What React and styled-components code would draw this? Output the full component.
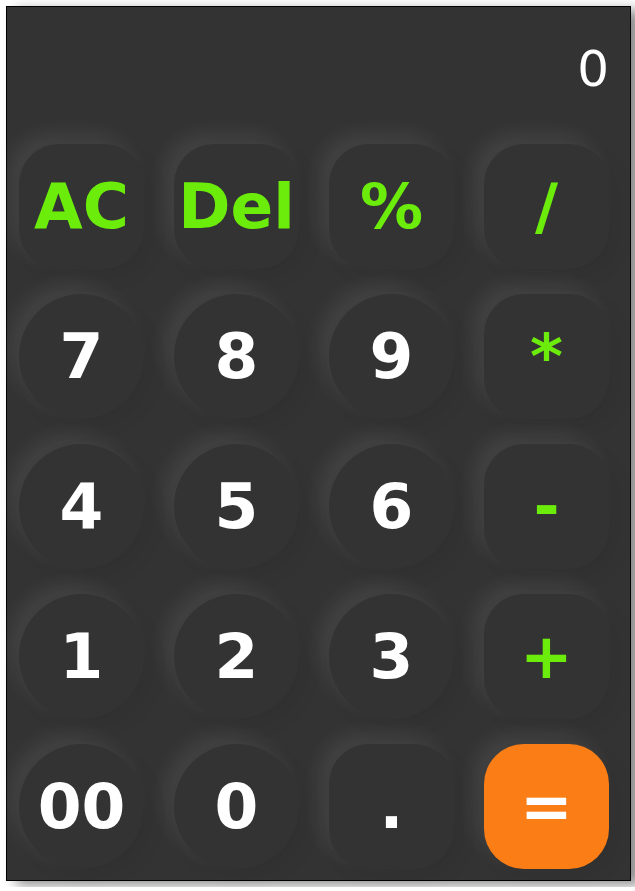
import React from 'react'
import styled, { createGlobalStyle, css } from 'styled-components'

const GlobalStyle = createGlobalStyle`
  html, body {
    margin: 0;
    padding: 0;
    background: #ffffff;
  }
  body {
    font-family: "DejaVu Sans", Verdana, sans-serif;
  }
`

const Page = styled.div`
  padding: 6px;
`

const Calculator = styled.div`
  box-sizing: border-box;
  width: 625px;
  height: 875px;
  background: #333333;
  border: 1px solid #000000;
  box-shadow: 10px 4px 12px rgba(0, 0, 0, 0.45);
  display: flex;
  flex-direction: column;
`

const Display = styled.div`
  box-sizing: border-box;
  height: 137px;
  padding: 37px 21px 0 0;
  text-align: right;
  color: #ffffff;
  font-family: "DejaVu Sans", Verdana, sans-serif;
  font-size: 50px;
  line-height: 1;
`

const Keypad = styled.div`
  display: grid;
  grid-template-columns: repeat(4, 125px);
  grid-auto-rows: 125px;
  gap: 25px 30px;
  padding: 0 0 0 12px;
`

const Key = styled.button`
  border: none;
  outline: none;
  padding: 0;
  margin: 0;
  background: #333333;
  color: ${(p) => (p.$op ? '#6cec0b' : '#ffffff')};
  font-family: "DejaVu Sans", Verdana, sans-serif;
  font-weight: bold;
  font-size: 63px;
  line-height: 1;
  display: flex;
  align-items: center;
  justify-content: center;
  border-radius: ${(p) => (p.$round ? '50%' : '40px')};
  box-shadow: -10px -10px 20px rgba(255, 255, 255, 0.08),
    8px 8px 20px rgba(0, 0, 0, 0.06);
  cursor: pointer;

  ${(p) =>
    p.$equal &&
    css`
      background: #fa7d16;
      color: #ffffff;
    `}
`

const keys = [
  { label: 'AC', op: true },
  { label: 'Del', op: true },
  { label: '%', op: true },
  { label: '/', op: true },
  { label: '7', round: true },
  { label: '8', round: true },
  { label: '9', round: true },
  { label: '*', op: true },
  { label: '4', round: true },
  { label: '5', round: true },
  { label: '6', round: true },
  { label: '-', op: true },
  { label: '1', round: true },
  { label: '2', round: true },
  { label: '3', round: true },
  { label: '+', op: true },
  { label: '00', round: true },
  { label: '0', round: true },
  { label: '.' },
  { label: '=', equal: true },
]

export default function App() {
  return (
    <Page>
      <GlobalStyle />
      <Calculator>
        <Display>0</Display>
        <Keypad>
          {keys.map((k) => (
            <Key key={k.label} $op={k.op} $round={k.round} $equal={k.equal}>
              {k.label}
            </Key>
          ))}
        </Keypad>
      </Calculator>
    </Page>
  )
}
